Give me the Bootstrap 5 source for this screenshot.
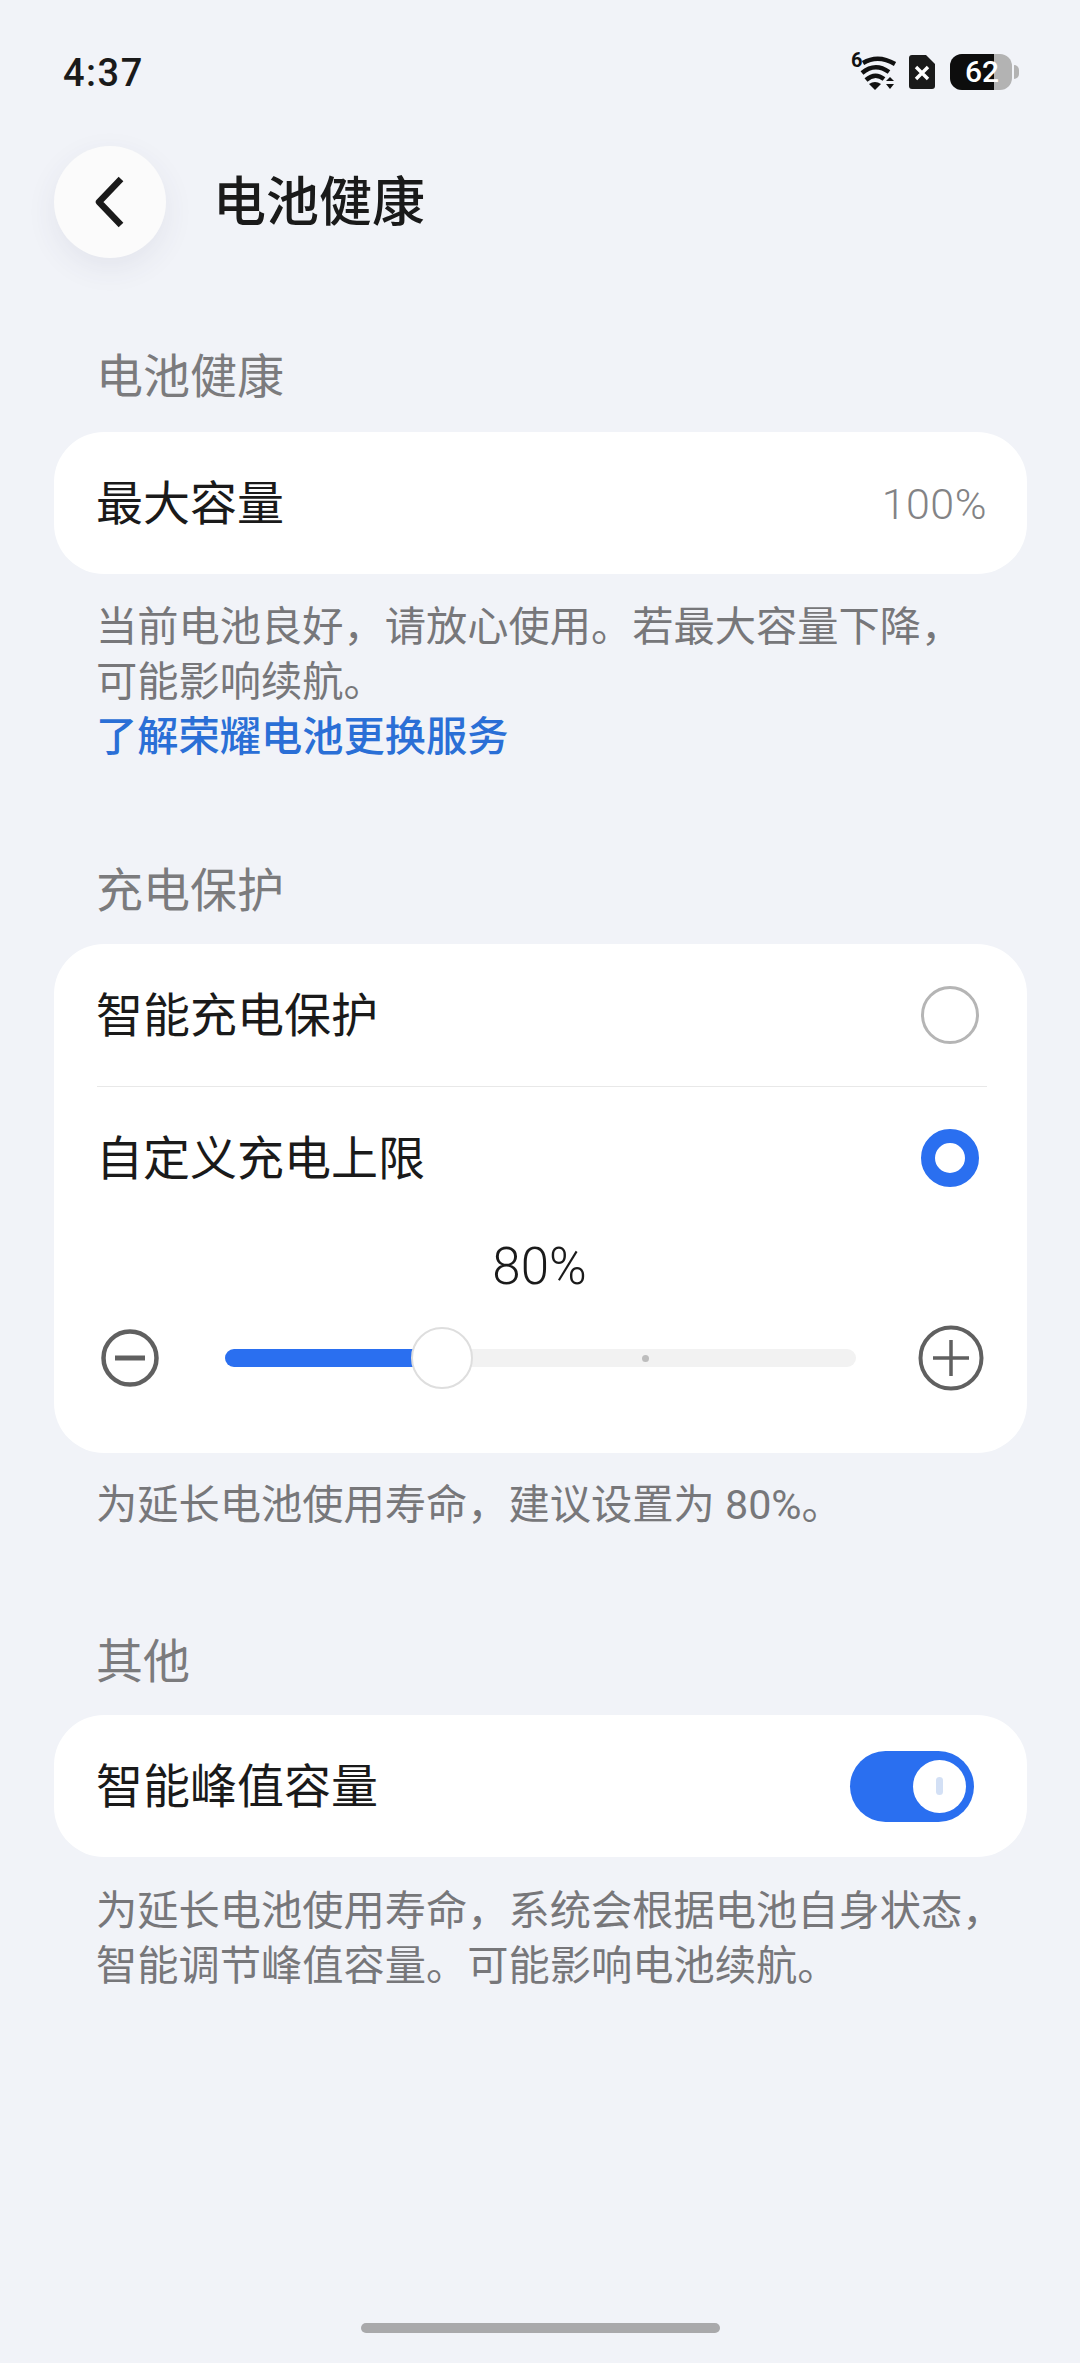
<!DOCTYPE html>
<html lang="zh-CN">
<head>
<meta charset="UTF-8" />
<meta name="viewport" content="width=device-width, initial-scale=1.0"/>
<title>电池健康</title>
<link href="https://cdn.jsdelivr.net/npm/bootstrap@5.3.2/dist/css/bootstrap.min.css" rel="stylesheet">
<style>
  body {
    background-color: #f1f3f8;
    color: #1a1a1a;
    font-family: "Roboto", "Noto Sans CJK SC", sans-serif;
    overflow: hidden;
  }
  .page-wrap { height: 2363px; padding: 0 53px 0 54px; }
  .status-bar { height: 146px; padding: 51px 8px 0 9px; }
  .status-time { font-size: 38px; font-weight: 500; line-height: 44px; letter-spacing: 1.5px; }
  .status-icons { margin-top: 2px; }
  .wifi-box { position: relative; width: 46px; height: 38px; }
  .wifi-gen { position: absolute; left: 0; top: -4px; font-size: 20px; line-height: 22px; font-weight: 700; color: #111; }
  .sim-icon { margin-left: 12px; }
  .battery-box {
    position: relative; width: 62px; height: 36px; margin-left: 15px;
    background: #b3b3b3; border-radius: 12px;
  }
  .battery-level { position: absolute; left: 0; top: 0; bottom: 0; background: #0d0d0d; border-radius: 12px 0 0 12px; }
  .battery-num {
    position: absolute; left: 15px; top: 0; line-height: 36px;
    font-size: 30px; font-weight: 500; color: #fff;
  }
  .battery-nub { width: 5px; height: 14px; background: #b3b3b3; border-radius: 0 5px 5px 0; margin-left: 2px; }
  .back-btn {
    width: 112px; height: 112px; background: #fbfbfb;
    box-shadow: 0 10px 30px rgba(60, 70, 100, .08);
  }
  .page-title { font-size: 53px; font-weight: 500; margin-left: 47px; line-height: 109px; padding-top: 3px; }
  .group-label { font-size: 47px; line-height: 56px; color: #7b7b7d; margin: 91px 0 27px 42px; }
  .group-label.gap-big { margin-top: 98px; margin-bottom: 25px; }
  .group-label.gap-last { margin-top: 101px; margin-bottom: 25px; }
  .panel { border: 0; border-radius: 50px; background: #fff; }
  .panel-row { height: 142px; padding: 2px 43px 0 42px; font-size: 47px; }
  .panel-sep { height: 1px; background: #e8e8e8; margin: 0 40px 0 43px; }
  .value-text { font-size: 43px; color: #838385; font-weight: 300; letter-spacing: .5px; margin-right: -3px; }
  .note-text { font-size: 41.25px; line-height: 55px; color: #77777a; margin: 26px 0 0 42px; }
  .note-text.note-mid { margin-top: 25px; }
  .note-text.note-last { margin-top: 27px; }
  .note-link { color: #2a6fd6; font-weight: 500; }
  .radio-off { width: 58px; height: 58px; border: 3px solid #b5b5b5; border-radius: 50%; margin-right: 5px; margin-top: -2px; }
  .radio-on { width: 58px; height: 58px; border: 14px solid #2a6ff0; border-radius: 50%; margin-right: 5px; margin-top: -2px; background: #fff; }
  .limit-value { font-size: 51px; font-weight: 300; line-height: 50px; text-align: center; margin: 13px 0 33px; padding-right: 2px; }
  .slider-row { height: 66px; padding: 0 43px 0 47px; margin-bottom: 62px; }
  .slider-track { position: relative; flex: 1; height: 18px; margin: 0 62px 0 66px; background: #f2f2f2; border-radius: 9px; }
  .slider-fill { position: absolute; left: 0; top: 0; bottom: 0; background: #2a6ff0; border-radius: 9px 0 0 9px; }
  .slider-dot { position: absolute; left: 417px; top: 6px; width: 7px; height: 7px; border-radius: 50%; background: #bdbdbd; }
  .slider-thumb {
    position: absolute; left: 186px; top: -22px; width: 62px; height: 62px;
    background: #fff; border: 2px solid #dedede; border-radius: 50%;
  }
  .switch-on { position: relative; width: 124px; height: 71px; margin-right: 10px; margin-top: -2px; background: #2a6ff0; border-radius: 36px; }
  .switch-knob { position: absolute; right: 8px; top: 9px; width: 53px; height: 53px; background: #fff; border-radius: 50%; }
  .switch-tick { width: 7px; height: 18px; background: #d3e0f5; border-radius: 4px; }
  .home-bar { width: 359px; height: 10px; background: #a9a9ab; border-radius: 5px; margin: 0 auto 30px; }
</style>
</head>
<body>
<div class="page-wrap d-flex flex-column">

  <!-- status bar -->
  <div class="status-bar d-flex justify-content-between align-items-start">
    <span class="status-time">4:37</span>
    <div class="status-icons d-flex align-items-center">
      <div class="wifi-box">
        <span class="wifi-gen">6</span>
        <svg width="46" height="38" viewBox="0 0 46 38">
          <g fill="none" stroke="#111" stroke-width="4.4">
            <path d="M12 10 Q27 1 44 11"/>
            <path d="M11 20 Q24 9 38 19"/>
            <path d="M15 27 Q24 19 33 26"/>
          </g>
          <path d="M18 31 Q24 27 30 31 L24 37 Z" fill="#111"/>
          <path d="M35 28 L39 24 L43 28 Z M35 31 L43 31 L39 36 Z" fill="#111"/>
        </svg>
      </div>
      <svg class="sim-icon" width="26" height="34" viewBox="0 0 26 34">
        <path d="M3 0 H17 L26 9 V31 Q26 34 23 34 H3 Q0 34 0 31 V3 Q0 0 3 0 Z" fill="#1a1a1a"/>
        <path d="M7 12 L19 24 M19 12 L7 24" stroke="#fff" stroke-width="3.4" fill="none"/>
      </svg>
      <div class="battery-box">
        <div class="battery-level" style="width: 71%"></div>
        <span class="battery-num">62</span>
      </div>
      <div class="battery-nub"></div>
    </div>
  </div>

  <!-- header -->
  <div class="d-flex align-items-center">
    <div class="back-btn rounded-circle d-flex align-items-center justify-content-center">
      <svg width="34" height="54" viewBox="0 0 34 54">
        <path d="M28 4 L6 27 L28 50" fill="none" stroke="#1a1a1a" stroke-width="6.5" stroke-linejoin="round"/>
      </svg>
    </div>
    <span class="page-title">电池健康</span>
  </div>

  <!-- battery health -->
  <div class="group-label">电池健康</div>
  <div class="card panel">
    <div class="panel-row d-flex align-items-center justify-content-between">
      <span>最大容量</span>
      <span class="value-text">100%</span>
    </div>
  </div>
  <div class="note-text">
    当前电池良好，请放心使用。若最大容量下降，<br>可能影响续航。<br>
    <a class="note-link text-decoration-none" href="#">了解荣耀电池更换服务</a>
  </div>

  <!-- charge protection -->
  <div class="group-label gap-big">充电保护</div>
  <div class="card panel">
    <div class="panel-row d-flex align-items-center justify-content-between">
      <span>智能充电保护</span>
      <span class="radio-off"></span>
    </div>
    <div class="panel-sep"></div>
    <div class="panel-row d-flex align-items-center justify-content-between">
      <span>自定义充电上限</span>
      <span class="radio-on"></span>
    </div>
    <div class="limit-value">80%</div>
    <div class="slider-row d-flex align-items-center">
      <svg width="58" height="58" viewBox="0 0 58 58">
        <circle cx="29" cy="29" r="26.5" fill="none" stroke="#606060" stroke-width="4.5"/>
        <path d="M14 29 H44" stroke="#606060" stroke-width="5"/>
      </svg>
      <div class="slider-track">
        <div class="slider-fill" style="width: 195px"></div>
        <div class="slider-dot"></div>
        <div class="slider-thumb"></div>
      </div>
      <svg width="66" height="66" viewBox="0 0 66 66">
        <circle cx="33" cy="33" r="30.5" fill="none" stroke="#606060" stroke-width="4"/>
        <path d="M15 33 H51 M33 15 V51" stroke="#606060" stroke-width="3.5"/>
      </svg>
    </div>
  </div>
  <div class="note-text note-mid">为延长电池使用寿命，建议设置为 80%。</div>

  <!-- other -->
  <div class="group-label gap-last">其他</div>
  <div class="card panel">
    <div class="panel-row d-flex align-items-center justify-content-between">
      <span>智能峰值容量</span>
      <div class="switch-on">
        <div class="switch-knob d-flex align-items-center justify-content-center">
          <div class="switch-tick"></div>
        </div>
      </div>
    </div>
  </div>
  <div class="note-text note-last">为延长电池使用寿命，系统会根据电池自身状态，<br>智能调节峰值容量。可能影响电池续航。</div>

  <div class="home-bar mt-auto"></div>
</div>
<script src="https://cdn.jsdelivr.net/npm/bootstrap@5.3.2/dist/js/bootstrap.bundle.min.js"></script>
</body>
</html>
